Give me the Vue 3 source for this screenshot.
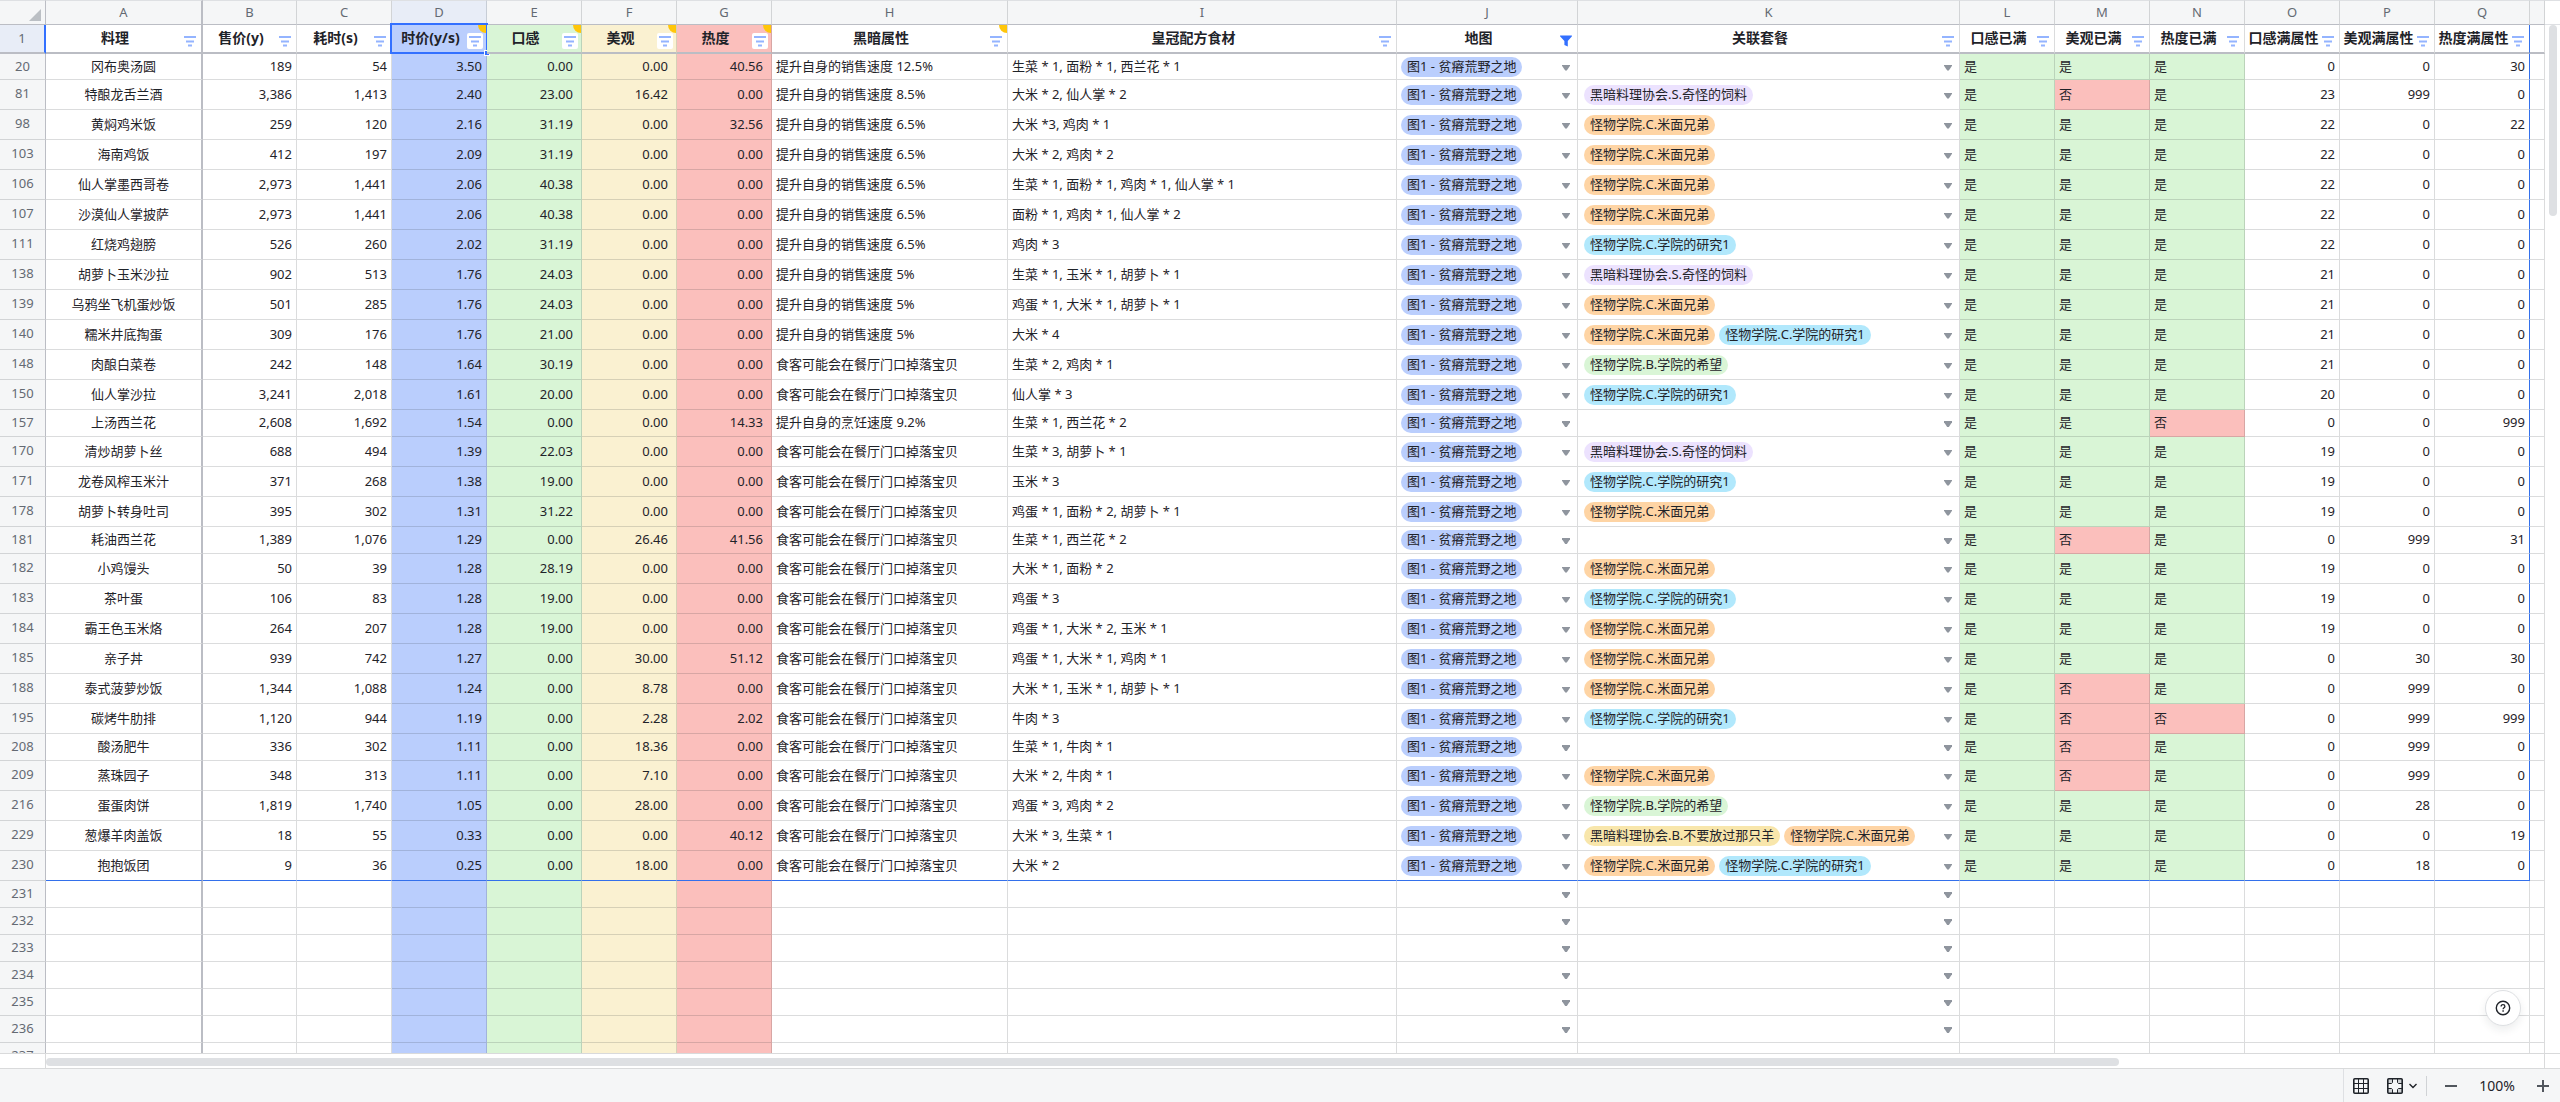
<script setup>
const columns = [
  { id: 'A', title: '料理', cls: 'col-a' },
  { id: 'B', title: '售价(y)', cls: 'col-b' },
  { id: 'C', title: '耗时(s)', cls: 'col-n' },
  { id: 'D', title: '时价(y/s)', cls: 'col-n', tone: 'blue', note: true, active: true },
  { id: 'E', title: '口感', cls: 'col-n', tone: 'green', note: true },
  { id: 'F', title: '美观', cls: 'col-n', tone: 'yellow', note: true },
  { id: 'G', title: '热度', cls: 'col-n', tone: 'red', note: true },
  { id: 'H', title: '黑暗属性', cls: 'col-h', note: true },
  { id: 'I', title: '皇冠配方食材', cls: 'col-i' },
  { id: 'J', title: '地图', cls: 'col-j', filtered: true },
  { id: 'K', title: '关联套餐', cls: 'col-k' },
  { id: 'L', title: '口感已满', cls: 'col-n' },
  { id: 'M', title: '美观已满', cls: 'col-n' },
  { id: 'N', title: '热度已满', cls: 'col-n' },
  { id: 'O', title: '口感满属性', cls: 'col-n' },
  { id: 'P', title: '美观满属性', cls: 'col-n' },
  { id: 'Q', title: '热度满属性', cls: 'col-n' },
]

const SETS = {
  s: { text: '黑暗料理协会.S.奇怪的饲料', tone: 'purple' },
  m: { text: '怪物学院.C.米面兄弟', tone: 'orange' },
  r: { text: '怪物学院.C.学院的研究1', tone: 'cyan' },
  h: { text: '怪物学院.B.学院的希望', tone: 'green' },
  y: { text: '黑暗料理协会.B.不要放过那只羊', tone: 'gold' },
}

const drop = '食客可能会在餐厅门口掉落宝贝'
const sell = (n) => `提升自身的销售速度 ${n}%`

// row, dish, price, time, rate, taste, look, heat, trait, recipe, sets, full flags, gaps
const source = [
  [20, '冈布奥汤圆', '189', '54', '3.50', '0.00', '0.00', '40.56', sell('12.5'), '生菜 * 1, 面粉 * 1, 西兰花 * 1', '', '是是是', 0, 0, 30],
  [81, '特酿龙舌兰酒', '3,386', '1,413', '2.40', '23.00', '16.42', '0.00', sell('8.5'), '大米 * 2, 仙人掌 * 2', 's', '是否是', 23, 999, 0],
  [98, '黄焖鸡米饭', '259', '120', '2.16', '31.19', '0.00', '32.56', sell('6.5'), '大米 *3, 鸡肉 * 1', 'm', '是是是', 22, 0, 22],
  [103, '海南鸡饭', '412', '197', '2.09', '31.19', '0.00', '0.00', sell('6.5'), '大米 * 2, 鸡肉 * 2', 'm', '是是是', 22, 0, 0],
  [106, '仙人掌墨西哥卷', '2,973', '1,441', '2.06', '40.38', '0.00', '0.00', sell('6.5'), '生菜 * 1, 面粉 * 1, 鸡肉 * 1, 仙人掌 * 1', 'm', '是是是', 22, 0, 0],
  [107, '沙漠仙人掌披萨', '2,973', '1,441', '2.06', '40.38', '0.00', '0.00', sell('6.5'), '面粉 * 1, 鸡肉 * 1, 仙人掌 * 2', 'm', '是是是', 22, 0, 0],
  [111, '红烧鸡翅膀', '526', '260', '2.02', '31.19', '0.00', '0.00', sell('6.5'), '鸡肉 * 3', 'r', '是是是', 22, 0, 0],
  [138, '胡萝卜玉米沙拉', '902', '513', '1.76', '24.03', '0.00', '0.00', sell('5'), '生菜 * 1, 玉米 * 1, 胡萝卜 * 1', 's', '是是是', 21, 0, 0],
  [139, '乌鸦坐飞机蛋炒饭', '501', '285', '1.76', '24.03', '0.00', '0.00', sell('5'), '鸡蛋 * 1, 大米 * 1, 胡萝卜 * 1', 'm', '是是是', 21, 0, 0],
  [140, '糯米井底掏蛋', '309', '176', '1.76', '21.00', '0.00', '0.00', sell('5'), '大米 * 4', 'mr', '是是是', 21, 0, 0],
  [148, '肉酿白菜卷', '242', '148', '1.64', '30.19', '0.00', '0.00', drop, '生菜 * 2, 鸡肉 * 1', 'h', '是是是', 21, 0, 0],
  [150, '仙人掌沙拉', '3,241', '2,018', '1.61', '20.00', '0.00', '0.00', drop, '仙人掌 * 3', 'r', '是是是', 20, 0, 0],
  [157, '上汤西兰花', '2,608', '1,692', '1.54', '0.00', '0.00', '14.33', '提升自身的烹饪速度 9.2%', '生菜 * 1, 西兰花 * 2', '', '是是否', 0, 0, 999],
  [170, '清炒胡萝卜丝', '688', '494', '1.39', '22.03', '0.00', '0.00', drop, '生菜 * 3, 胡萝卜 * 1', 's', '是是是', 19, 0, 0],
  [171, '龙卷风榨玉米汁', '371', '268', '1.38', '19.00', '0.00', '0.00', drop, '玉米 * 3', 'r', '是是是', 19, 0, 0],
  [178, '胡萝卜转身吐司', '395', '302', '1.31', '31.22', '0.00', '0.00', drop, '鸡蛋 * 1, 面粉 * 2, 胡萝卜 * 1', 'm', '是是是', 19, 0, 0],
  [181, '耗油西兰花', '1,389', '1,076', '1.29', '0.00', '26.46', '41.56', drop, '生菜 * 1, 西兰花 * 2', '', '是否是', 0, 999, 31],
  [182, '小鸡馒头', '50', '39', '1.28', '28.19', '0.00', '0.00', drop, '大米 * 1, 面粉 * 2', 'm', '是是是', 19, 0, 0],
  [183, '茶叶蛋', '106', '83', '1.28', '19.00', '0.00', '0.00', drop, '鸡蛋 * 3', 'r', '是是是', 19, 0, 0],
  [184, '霸王色玉米烙', '264', '207', '1.28', '19.00', '0.00', '0.00', drop, '鸡蛋 * 1, 大米 * 2, 玉米 * 1', 'm', '是是是', 19, 0, 0],
  [185, '亲子丼', '939', '742', '1.27', '0.00', '30.00', '51.12', drop, '鸡蛋 * 1, 大米 * 1, 鸡肉 * 1', 'm', '是是是', 0, 30, 30],
  [188, '泰式菠萝炒饭', '1,344', '1,088', '1.24', '0.00', '8.78', '0.00', drop, '大米 * 1, 玉米 * 1, 胡萝卜 * 1', 'm', '是否是', 0, 999, 0],
  [195, '碳烤牛肋排', '1,120', '944', '1.19', '0.00', '2.28', '2.02', drop, '牛肉 * 3', 'r', '是否否', 0, 999, 999],
  [208, '酸汤肥牛', '336', '302', '1.11', '0.00', '18.36', '0.00', drop, '生菜 * 1, 牛肉 * 1', '', '是否是', 0, 999, 0],
  [209, '蒸珠园子', '348', '313', '1.11', '0.00', '7.10', '0.00', drop, '大米 * 2, 牛肉 * 1', 'm', '是否是', 0, 999, 0],
  [216, '蛋蛋肉饼', '1,819', '1,740', '1.05', '0.00', '28.00', '0.00', drop, '鸡蛋 * 3, 鸡肉 * 2', 'h', '是是是', 0, 28, 0],
  [229, '葱爆羊肉盖饭', '18', '55', '0.33', '0.00', '0.00', '40.12', drop, '大米 * 3, 生菜 * 1', 'ym', '是是是', 0, 0, 19],
  [230, '抱抱饭团', '9', '36', '0.25', '0.00', '18.00', '0.00', drop, '大米 * 2', 'mr', '是是是', 0, 18, 0],
]

const rows = source.map((r) => ({
  num: r[0],
  dish: r[1],
  price: r[2],
  time: r[3],
  rate: r[4],
  stats: [
    { value: r[5], tone: 'green' },
    { value: r[6], tone: 'yellow' },
    { value: r[7], tone: 'red' },
  ],
  trait: r[8],
  recipe: r[9],
  sets: [...r[10]].map((k) => SETS[k]),
  full: [...r[11]],
  gaps: r.slice(12),
}))

const emptyRows = [231, 232, 233, 234, 235, 236, 237]
</script>

<template>
  <main class="sheet">
    <div class="viewport">
      <div class="grid">
        <table>
          <colgroup>
            <col class="col-num" />
            <col v-for="c in columns" :key="c.id" :class="c.cls" />
            <col class="col-r" />
          </colgroup>
          <thead>
            <tr class="letters">
              <th class="corner"><svg width="12" height="12" viewBox="0 0 12 12"><path d="M12 0V12H0Z" fill="#bbbfc4" /></svg></th>
              <th v-for="c in columns" :key="c.id" :class="{ frozen: c.id === 'A', current: c.active }">{{ c.id }}</th>
              <th></th>
            </tr>
            <tr class="titles">
              <th class="num current" scope="row">1</th>
              <th
                v-for="c in columns"
                :key="c.id"
                scope="col"
                :class="[c.tone, { frozen: c.id === 'A', edge: c.id === 'Q' }]"
              >
                {{ c.title }}
                <span v-if="c.note" class="note"></span>
                <button class="filter" :class="{ boxed: c.tone }" :aria-label="'筛选 ' + c.title">
                  <svg v-if="c.filtered" width="16" height="16" viewBox="0 0 16 16">
                    <path d="M2.5 2.5h11c.5 0 .6.5.3.9L9.8 8v5.6L6.4 12V8L2.2 3.4c-.3-.4-.2-.9.3-.9Z" fill="#3370ff" />
                  </svg>
                  <svg v-else width="16" height="16" viewBox="0 0 16 16">
                    <path d="M2 4h12M4 8.500h8M6 12.500h4" stroke="#94b4ff" stroke-width="2" />
                  </svg>
                </button>
                <span v-if="c.active" class="selection"></span>
              </th>
              <th></th>
            </tr>
          </thead>
          <tbody>
            <tr v-for="(r, i) in rows" :key="r.num" :class="{ tall: r.sets.length, first: i === 0, last: i === rows.length - 1 }">
              <th class="num" scope="row">{{ r.num }}</th>
              <td class="center frozen">{{ r.dish }}</td>
              <td class="right">{{ r.price }}</td>
              <td class="right">{{ r.time }}</td>
              <td class="right blue">{{ r.rate }}</td>
              <td v-for="s in r.stats" :key="s.tone" class="right spaced" :class="s.tone">{{ s.value }}</td>
              <td>{{ r.trait }}</td>
              <td>{{ r.recipe }}</td>
              <td class="pick">
                <div class="picker">
                  <span class="pill blue">图1 - 贫瘠荒野之地</span>
                  <button class="arrow" aria-label="选择地图"></button>
                </div>
              </td>
              <td class="pick">
                <div class="picker multi">
                  <span v-for="s in r.sets" :key="s.text" class="pill" :class="s.tone">{{ s.text }}</span>
                  <button class="arrow" aria-label="选择套餐"></button>
                </div>
              </td>
              <td v-for="(f, n) in r.full" :key="n" :class="f === '是' ? 'green' : 'red'">{{ f }}</td>
              <td v-for="(g, n) in r.gaps" :key="n" class="right" :class="{ edge: n === 2 }">{{ g }}</td>
              <td></td>
            </tr>
            <tr v-for="n in emptyRows" :key="n">
              <th class="num" scope="row">{{ n }}</th>
              <td class="frozen"></td>
              <td></td>
              <td></td>
              <td class="blue"></td>
              <td class="green"></td>
              <td class="yellow"></td>
              <td class="red"></td>
              <td></td>
              <td></td>
              <td class="pick"><div class="picker"><button class="arrow" aria-label="选择地图"></button></div></td>
              <td class="pick"><div class="picker"><button class="arrow" aria-label="选择套餐"></button></div></td>
              <td v-for="k in 7" :key="k"></td>
            </tr>
          </tbody>
        </table>
      </div>
      <div class="vscroll">
        <div class="vhead"></div>
        <div class="vthumb"></div>
      </div>
      <button class="help" aria-label="帮助">
        <svg width="16" height="16" viewBox="0 0 16 16" fill="none" stroke="#1f2329">
          <circle cx="8" cy="8" r="6.700" stroke-width="1.400" />
          <path d="M6.100 6.600C6.100 5.400 6.900 4.700 8 4.700s1.900.7 1.900 1.700c0 1.300-1.800 1.400-1.800 2.800" stroke-width="1.300" />
          <path d="M7.400 11h1.400" stroke-width="1.400" />
        </svg>
      </button>
    </div>

    <div class="hscroll">
      <div class="hnum"></div>
      <div class="htrack"><div class="hthumb"></div></div>
      <div class="hend"></div>
    </div>

    <footer class="status">
      <div class="tools">
        <button aria-label="网格线">
          <svg width="16" height="16" viewBox="0 0 16 16" fill="none" stroke="#1f2329">
            <rect x=".8" y=".8" width="14.400" height="14.400" rx="1" stroke-width="1.600" />
            <path d="M5.500 1v14M10.500 1v14M1 5.500h14M1 10.500h14" />
          </svg>
        </button>
        <button class="focus" aria-label="聚焦单元格">
          <svg width="16" height="16" viewBox="0 0 16 16" fill="none" stroke="#1f2329">
            <path d="M1 1h4.500v4.500H1zM10.500 1H15v4.500h-4.500zM1 10.500h4.500V15H1zM10.500 10.500H15V15h-4.500z" fill="#d0d3d6" stroke="none" />
            <rect x=".8" y=".8" width="14.400" height="14.400" rx="1" stroke-width="1.600" />
            <path d="M5.500 1v3.500l-1 1H1M10.500 1v3.500l1 1H15M5.500 15v-3.500l-1-1H1M10.500 15v-3.500l1-1H15" />
          </svg>
          <svg width="8" height="6" viewBox="0 0 8 6" fill="none" stroke="#1f2329" stroke-width="1.400"><path d="M.5 1 4 4.500 7.500 1" /></svg>
        </button>
        <span class="divider"></span>
        <button aria-label="缩小"><svg width="12" height="12" viewBox="0 0 12 12"><path d="M0 6h12" stroke="#51565d" stroke-width="2" /></svg></button>
        <button class="zoom">100%</button>
        <button aria-label="放大"><svg width="12" height="12" viewBox="0 0 12 12"><path d="M0 6h12M6 0v12" stroke="#51565d" stroke-width="2" /></svg></button>
      </div>
    </footer>
  </main>
</template>

<style>
body {
  margin: 0;
  background: #fff;
}
</style>

<style scoped>
.sheet {
  --line: rgba(31, 35, 41, 0.16);
  --strong: #bbbdc4;
  --accent: #3370eb;
  display: flex;
  flex-direction: column;
  height: 100vh;
  overflow: hidden;
  box-sizing: border-box;
  font: 13px/18px "Noto Sans", "Noto Sans CJK SC", sans-serif;
  color: #1f2329;
}
button {
  display: flex;
  align-items: center;
  justify-content: center;
  margin: 0;
  padding: 0;
  border: 0;
  background: none;
  font: inherit;
  color: inherit;
}
.viewport {
  position: relative;
  display: flex;
  flex: 1;
  min-height: 0;
}
.grid {
  flex: 1;
  min-width: 0;
  overflow: hidden;
}
table {
  width: 100%;
  table-layout: fixed;
  border-collapse: separate;
  border-spacing: 0;
}
.col-num { width: 46px; }
.col-a { width: 157px; }
.col-b { width: 94px; }
.col-n { width: 95px; }
.col-h { width: 236px; }
.col-j { width: 181px; }
.col-k { width: 382px; }
.col-r { width: 15px; }

th,
td {
  box-sizing: border-box;
  height: 27px;
  padding: 0 4px 2px;
  border: 0 solid var(--line);
  border-right-width: 1px;
  border-bottom-width: 1px;
  text-align: left;
  white-space: nowrap;
  overflow: hidden;
}
.pick { padding-bottom: 0; }
tr.first > * { height: 26px; }
tr.tall > * { height: 30px; }
tr.last > td:not(:last-child) { border-bottom-color: var(--accent); }

.letters th {
  height: 25px;
  padding: 0 0 2px;
  border-top: 1px solid #dee0e3;
  border-bottom-color: var(--strong);
  background: #f5f6f7;
  color: #646a73;
  font-weight: 400;
  text-align: center;
}
.letters .corner {
  padding: 0 4px 3px 0;
  vertical-align: bottom;
  border-right-color: var(--strong);
}
.corner svg {
  display: block;
  margin-left: auto;
}
.titles th {
  position: relative;
  height: 29px;
  padding: 0 17px 2px 0;
  border-bottom: 2px solid var(--strong);
  font-size: 14px;
  line-height: 20px;
  font-weight: 700;
  text-align: center;
  overflow: visible;
}
.num,
.titles .num {
  padding: 0 0 2px;
  border-right-color: var(--strong);
  background: #f5f6f7;
  color: #646a73;
  font-size: 13px;
  font-weight: 400;
  text-align: center;
}
.tall .num { padding-bottom: 4px; }
.letters .current,
.titles .current { background: #e8edf7; }
.titles .num { border-right: 2px solid #3370ff; }
.letters .frozen,
.titles .frozen,
.frozen { border-right: 2px solid var(--strong); }
.titles .edge,
.edge { border-right-color: var(--accent); }

.center { text-align: center; }
.right { text-align: right; }
.spaced { padding-right: 8px; }

.blue { background: #bacefd; }
.green { background: #d9f5d6; }
.yellow { background: #faf1d1; }
.red { background: #fbbfbc; }
.purple { background: #ece2fe; }
.orange { background: #fed4a4; }
.cyan { background: #b1e8fc; }
.gold { background: #f8e6ab; }

.filter {
  position: absolute;
  right: 3px;
  bottom: 3px;
  width: 16px;
  height: 16px;
}
.boxed {
  border-radius: 2px;
  background: #fff;
}
.note {
  position: absolute;
  top: 0;
  right: 0;
  width: 8px;
  height: 8px;
  border-bottom-left-radius: 8px;
  background: #ffc60a;
}
.selection {
  position: absolute;
  inset: -2px;
  border: 2px solid #3370ff;
  pointer-events: none;
}
.selection::after {
  content: "";
  position: absolute;
  right: -4px;
  bottom: -4px;
  width: 4px;
  height: 4px;
  border: 1px solid #fff;
  background: #3370ff;
}

.picker {
  display: flex;
  align-items: center;
  gap: 4px;
  height: 20px;
  padding-right: 3px;
}
.multi { padding-left: 2px; }
.pill {
  height: 20px;
  padding: 0 6px;
  border-radius: 10px;
  line-height: 18px;
}
.arrow {
  width: 8px;
  height: 6px;
  margin: 2px 0 0 auto;
  background: #8f959e;
  clip-path: polygon(0 0, 100% 0, 100% 20%, 60% 100%, 40% 100%, 0 20%);
}

.vscroll { width: 15px; }
.vhead {
  box-sizing: border-box;
  height: 25px;
  border-top: 1px solid #dee0e3;
  border-bottom: 1px solid #dee0e3;
}
.vthumb {
  width: 8px;
  height: 191px;
  margin-left: 4px;
  border-radius: 4px;
  background: #dee0e3;
}
.help {
  position: absolute;
  right: 39px;
  bottom: 27px;
  width: 36px;
  height: 36px;
  border: 1px solid #dee0e3;
  border-radius: 50%;
  background: #fff;
  box-shadow: 0 4px 8px rgba(31, 35, 41, 0.08);
}

.hscroll {
  display: flex;
  box-sizing: border-box;
  height: 16px;
  border-top: 1px solid #d9dadb;
  border-bottom: 1px solid #d9dadb;
}
.hnum {
  width: 45px;
  border-right: 1px solid #d9dadb;
}
.htrack {
  flex: 1;
  padding-top: 4px;
  border-right: 1px solid #d9dadb;
}
.hthumb {
  width: 83%;
  height: 8px;
  border-radius: 4px;
  background: #dee0e3;
}
.hend { width: 15px; }

.status {
  display: flex;
  justify-content: flex-end;
  height: 33px;
  background: #f5f6f7;
}
.tools {
  display: flex;
  align-items: center;
  gap: 18px;
  padding: 0 11px 0 9px;
  border-left: 1px solid #dee0e3;
}
.focus {
  gap: 6px;
  margin-right: -9px;
}
.divider {
  width: 1px;
  height: 20px;
  background: #d0d3d6;
}
.zoom {
  min-width: 44px;
  font-size: 14px;
}
</style>
